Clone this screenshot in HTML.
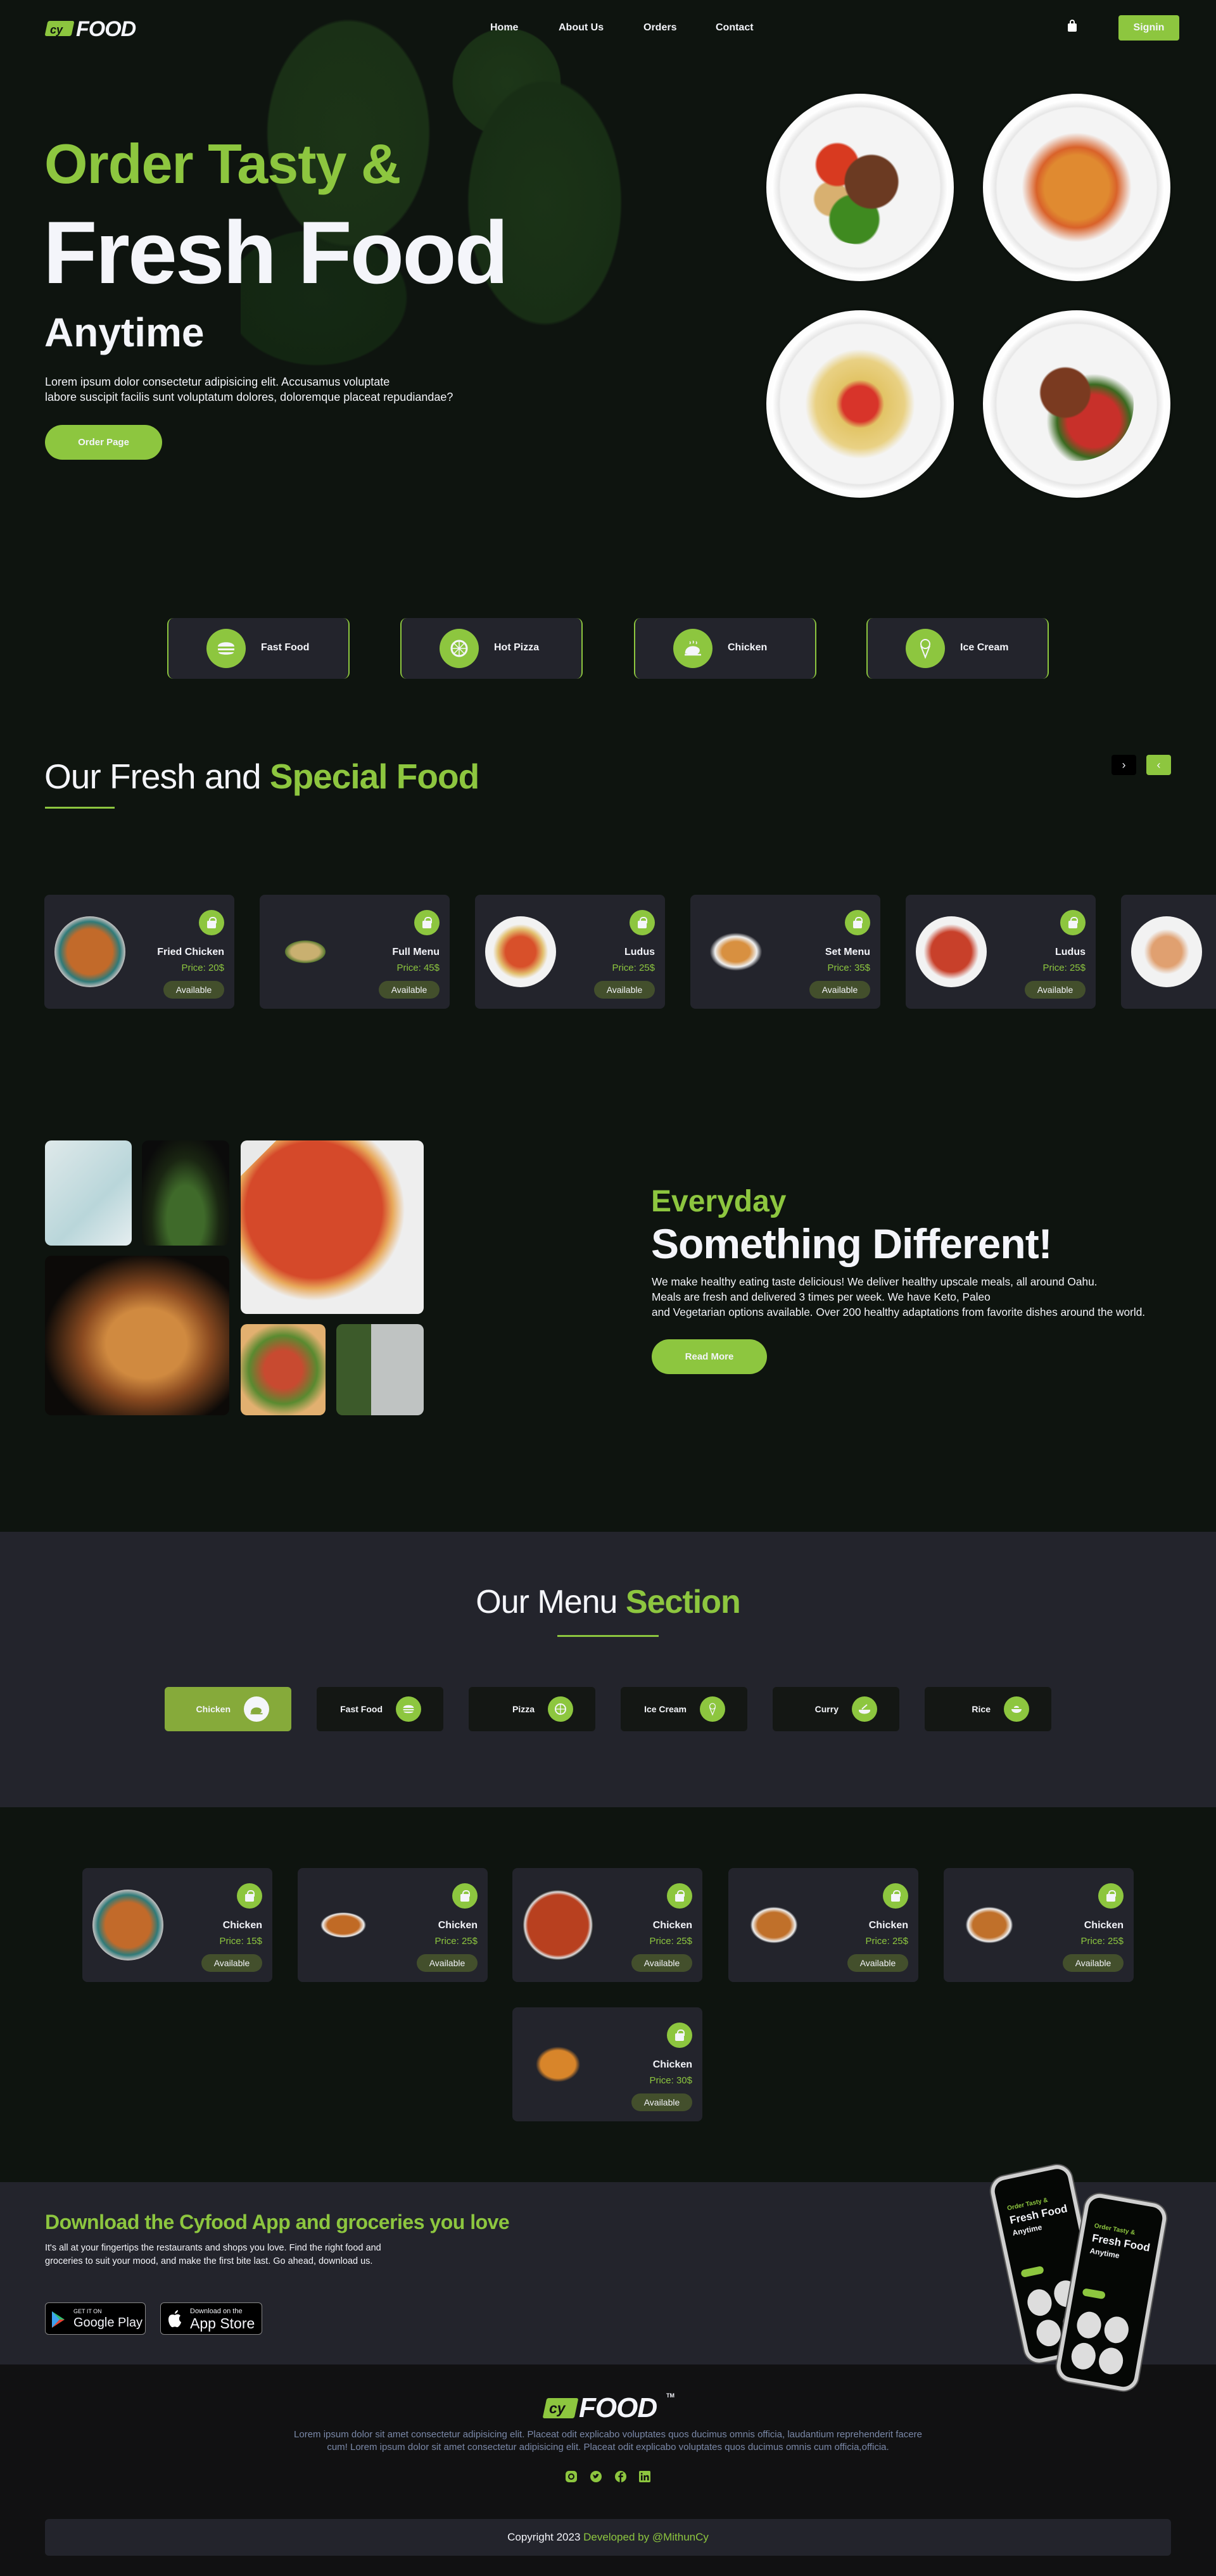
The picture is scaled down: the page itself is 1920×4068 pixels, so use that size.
<!DOCTYPE html>
<html><head><meta charset="utf-8"><style>
*{margin:0;padding:0;box-sizing:border-box}
body{width:1920px;height:4068px;background:#0e140f;font-family:"Liberation Sans",sans-serif;color:#f4f5fa;position:relative;overflow:hidden}
.a{position:absolute}
.g{color:#8dc63f}
.b{font-weight:bold}
.nav{font-size:16px;font-weight:bold;top:35px}
.plate{position:absolute;width:296px;height:296px;border-radius:50%;background:radial-gradient(circle,#f4f4f4 0 60%,#e6e6e6 61%,#fff 66%,#e9e9e9 100%);box-shadow:0 0 4px rgba(0,0,0,.4)}
.food{position:absolute;left:58px;top:58px;width:180px;height:180px;border-radius:50%}
.cat{position:absolute;top:976px;width:288px;height:96px;background:#23242c;border-left:2px solid #8dc63f;border-right:2px solid #8dc63f;border-radius:10px}
.cat .ic{position:absolute;left:60px;top:17px;width:62px;height:62px;border-radius:50%;background:#8dc63f}
.cat span{position:absolute;left:146px;top:38px;font-size:16px;font-weight:bold}
.ic svg,.tab i svg{position:absolute;left:50%;top:50%;transform:translate(-50%,-50%)}
.card{position:absolute;width:300px;height:180px;background:#23242c;border-radius:8px}
.card .im{position:absolute;left:16px;top:34px;width:112px;height:112px;border-radius:50%}
.card .lk{position:absolute;left:244px;top:24px;width:40px;height:40px;border-radius:50%;background:#8dc63f}
.lk:before{content:"";position:absolute;left:13px;top:17px;width:14px;height:12px;background:#f4f5fa;border-radius:2px}
.lk:after{content:"";position:absolute;left:16px;top:11px;width:8px;height:8px;border:2px solid #f4f5fa;border-bottom:none;border-radius:5px 5px 0 0}
.card .nm{position:absolute;right:16px;top:82px;font-size:16px;font-weight:bold;text-align:right;white-space:nowrap}
.card .pr{position:absolute;right:16px;top:107px;font-size:15px;color:#8dc63f;white-space:nowrap}
.card .av{position:absolute;right:16px;top:136px;width:96px;height:28px;border-radius:14px;background:#434f2c;font-size:14px;text-align:center;line-height:28px}
.tab{position:absolute;top:2664px;width:200px;height:70px;background:#141714;border-radius:6px}
.tab span{position:absolute;right:96px;top:27px;font-size:14px;font-weight:bold}
.tab i{position:absolute;left:125px;top:15px;width:40px;height:40px;border-radius:50%;background:#8dc63f}
.ph{position:absolute;border-radius:10px;overflow:hidden}
.btn{position:absolute;background:#8dc63f;color:#f4f5fa;font-weight:bold;font-size:15px;text-align:center;border-radius:30px}
</style></head><body>

<!-- hero bg broccoli -->
<div class="a" style="left:380px;top:0;width:700px;height:580px;background:
radial-gradient(ellipse 180px 250px at 170px 210px,#1c3417 0,#1a3016 70%,transparent 72%),
radial-gradient(ellipse 170px 270px at 480px 320px,#1b3317 0,#182e15 70%,transparent 72%),
radial-gradient(ellipse 120px 120px at 420px 130px,#1d3618 0,#1a3116 70%,transparent 72%),
radial-gradient(ellipse 200px 150px at 120px 470px,#152914 0,#132612 70%,transparent 72%)"></div>

<!-- header -->
<div class="a" style="left:73px;top:33px;width:42px;height:24px;background:#8dc63f;transform:skewX(-12deg);border-radius:3px"></div>
<div class="a" style="left:79px;top:37px;font-size:18px;font-weight:bold;font-style:italic;color:#0e140f">cy</div>
<div class="a b" style="left:120px;top:27px;font-size:34px;font-style:italic;letter-spacing:-1px">FOOD</div>
<div class="a nav" style="left:774px">Home</div>
<div class="a nav" style="left:882px">About Us</div>
<div class="a nav" style="left:1016px">Orders</div>
<div class="a nav" style="left:1130px">Contact</div>
<div class="a" style="left:1686px;top:37px;width:14px;height:13px;background:#fff;border-radius:2px"></div>
<div class="a" style="left:1689px;top:31px;width:8px;height:9px;border:2px solid #fff;border-bottom:none;border-radius:4px 4px 0 0"></div>
<div class="a" style="left:1766px;top:24px;width:96px;height:40px;background:#8dc63f;border-radius:4px;font-size:16px;font-weight:bold;text-align:center;line-height:40px">Signin</div>

<!-- hero text -->
<div class="a b g" style="left:70px;top:208px;font-size:88px;letter-spacing:-1px">Order Tasty &amp;</div>
<div class="a b" style="left:68px;top:318px;font-size:140px;letter-spacing:-3px">Fresh Food</div>
<div class="a b" style="left:70px;top:488px;font-size:64px">Anytime</div>
<div class="a" style="left:71px;top:591px;font-size:18px;line-height:24px">Lorem ipsum dolor consectetur adipisicing elit. Accusamus voluptate<br>labore suscipit facilis sunt voluptatum dolores, doloremque placeat repudiandae?</div>
<div class="btn" style="left:71px;top:671px;width:185px;height:55px;line-height:55px">Order Page</div>

<!-- plates -->
<div class="plate" style="left:1210px;top:148px"><div class="food" style="background:radial-gradient(circle at 60% 45%,#6b3a22 0 28%,transparent 30%),radial-gradient(circle at 30% 30%,#d83a20 0 18%,transparent 20%),radial-gradient(circle at 45% 78%,#3f8a20 0 22%,transparent 24%),radial-gradient(circle at 25% 60%,#d8b070 0 15%,transparent 17%)"></div></div>
<div class="plate" style="left:1552px;top:148px"><div class="food" style="background:radial-gradient(circle,#e08a30 0 40%,#d9622a 50%,transparent 68%)"></div></div>
<div class="plate" style="left:1210px;top:490px"><div class="food" style="background:radial-gradient(circle,#d8342a 0 22%,#e2c466 30%,#e9d184 55%,transparent 68%)"></div></div>
<div class="plate" style="left:1552px;top:490px"><div class="food" style="background:radial-gradient(circle at 40% 40%,#7a3a20 0 25%,transparent 27%),radial-gradient(circle at 65% 65%,#c8302a 0 25%,#3a6a20 35%,transparent 45%)"></div></div>

<!-- categories -->
<div class="cat" style="left:264px"><div class="ic"><svg width="30" height="28" viewBox="0 0 30 28"><path d="M2 11 C2 2 28 2 28 11Z M2 14 H28 V17 H2Z M3 20 H27 C27 25 3 25 3 20Z" fill="#f4f5fa"/></svg></div><span>Fast Food</span></div>
<div class="cat" style="left:632px"><div class="ic"><svg width="30" height="30" viewBox="0 0 30 30"><circle cx="15" cy="15" r="12" fill="none" stroke="#f4f5fa" stroke-width="3"/><path d="M15 3V27M3 15H27M6 6L24 24M24 6L6 24" stroke="#f4f5fa" stroke-width="1.5"/></svg></div><span>Hot Pizza</span></div>
<div class="cat" style="left:1001px"><div class="ic"><svg width="30" height="30" viewBox="0 0 30 30"><path d="M4 22 C4 12 18 10 24 16 C26 20 22 24 16 24Z M2 25 H28" stroke="#f4f5fa" stroke-width="2.5" fill="#f4f5fa"/><path d="M10 4 q2 2 0 4 M15 3 q2 2 0 4 M20 4 q2 2 0 4" stroke="#f4f5fa" stroke-width="1.5" fill="none"/></svg></div><span>Chicken</span></div>
<div class="cat" style="left:1368px"><div class="ic"><svg width="22" height="32" viewBox="0 0 22 32"><circle cx="11" cy="9" r="7" fill="none" stroke="#f4f5fa" stroke-width="2"/><path d="M4 12 L11 30 L18 12" fill="none" stroke="#f4f5fa" stroke-width="2"/></svg></div><span>Ice Cream</span></div>

<!-- special heading -->
<div class="a" style="left:70px;top:1194px;font-size:55px;letter-spacing:-1px">Our Fresh and <span class="g b">Special Food</span></div>
<div class="a" style="left:71px;top:1274px;width:110px;height:3px;background:#8dc63f"></div>
<div class="a" style="left:1755px;top:1192px;width:39px;height:32px;background:#000;border-radius:4px;text-align:center;line-height:32px;font-size:18px">&rsaquo;</div>
<div class="a" style="left:1810px;top:1192px;width:39px;height:32px;background:#8dc63f;border-radius:4px;text-align:center;line-height:32px;font-size:18px">&lsaquo;</div>

<!-- special cards -->
<div class="card" style="left:70px;top:1413px"><div class="im" style="background:radial-gradient(circle,#c26a2a 0 45%,#2f7a78 60%,#bbb 70%)"></div><div class="lk"></div><div class="nm">Fried Chicken</div><div class="pr">Price: 20$</div><div class="av">Available</div></div>
<div class="card" style="left:410px;top:1413px"><div class="im" style="background:radial-gradient(ellipse 45px 25px,#c9b070 0 50%,#5a7a30 70%,transparent 72%)"></div><div class="lk"></div><div class="nm">Full Menu</div><div class="pr">Price: 45$</div><div class="av">Available</div></div>
<div class="card" style="left:750px;top:1413px"><div class="im" style="background:radial-gradient(circle,#d8502a 0 30%,#e3c070 45%,#f2f2f2 55%)"></div><div class="lk"></div><div class="nm">Ludus</div><div class="pr">Price: 25$</div><div class="av">Available</div></div>
<div class="card" style="left:1090px;top:1413px"><div class="im" style="background:radial-gradient(ellipse 55px 40px,#d89040 0 40%,#eee 60%,transparent 75%)"></div><div class="lk"></div><div class="nm">Set Menu</div><div class="pr">Price: 35$</div><div class="av">Available</div></div>
<div class="card" style="left:1430px;top:1413px"><div class="im" style="background:radial-gradient(circle,#c8402a 0 40%,#f2f2f2 55%)"></div><div class="lk"></div><div class="nm">Ludus</div><div class="pr">Price: 25$</div><div class="av">Available</div></div>
<div class="card" style="left:1770px;top:1413px"><div class="im" style="background:radial-gradient(circle,#e0a070 0 30%,#f2f2f2 45%)"></div></div>

<!-- collage -->
<div class="ph" style="left:71px;top:1801px;width:137px;height:166px;background:linear-gradient(135deg,#dfe9ea,#b9d6da 60%,#e6eef0)"></div>
<div class="ph" style="left:224px;top:1801px;width:138px;height:166px;background:radial-gradient(ellipse at 50% 75%,#3f6a2a 0 30%,#1a2612 55%,#0b0b0b 80%)"></div>
<div class="ph" style="left:380px;top:1801px;width:289px;height:274px;background:linear-gradient(135deg,#e9e9e9 0 10%,transparent 10%),radial-gradient(circle at 40% 40%,#d5492a 0 45%,#e8a85a 52%,#eee 60%)"></div>
<div class="ph" style="left:71px;top:1983px;width:291px;height:252px;background:radial-gradient(ellipse at 55% 55%,#d08a40 0 28%,#8a4a20 45%,#0c0a08 72%)"></div>
<div class="ph" style="left:380px;top:2091px;width:134px;height:144px;background:radial-gradient(circle,#c84a30 0 30%,#5a8a30 55%,#e2b070 75%)"></div>
<div class="ph" style="left:531px;top:2091px;width:138px;height:144px;background:linear-gradient(90deg,#3c5a2a 0 40%,#bfc3c2 40% 100%)"></div>

<div class="a b g" style="left:1028px;top:1870px;font-size:48px">Everyday</div>
<div class="a b" style="left:1028px;top:1926px;font-size:66px;letter-spacing:-1px">Something Different!</div>
<div class="a" style="left:1029px;top:2012px;font-size:17.3px;line-height:24px">We make healthy eating taste delicious! We deliver healthy upscale meals, all around Oahu.<br>Meals are fresh and delivered 3 times per week. We have Keto, Paleo<br>and Vegetarian options available. Over 200 healthy adaptations from favorite dishes around the world.</div>
<div class="btn" style="left:1029px;top:2115px;width:182px;height:55px;line-height:55px">Read More</div>

<!-- menu section -->
<div class="a" style="left:0;top:2419px;width:1920px;height:435px;background:#23242c"></div>
<div class="a" style="left:0;top:2500px;width:1920px;text-align:center;font-size:52px;letter-spacing:-1px">Our Menu <span class="g b">Section</span></div>
<div class="a" style="left:880px;top:2582px;width:160px;height:3px;background:#8dc63f"></div>
<div class="tab" style="left:260px;background:#86aa3a"><span>Chicken</span><i style="background:#f4f5fa"><svg width="22" height="22" viewBox="0 0 30 30"><path d="M4 22 C4 12 18 10 24 16 C26 20 22 24 16 24Z M2 25 H28" stroke="#86aa3a" stroke-width="2.5" fill="#86aa3a"/></svg></i></div>
<div class="tab" style="left:500px"><span>Fast Food</span><i><svg width="20" height="18" viewBox="0 0 30 28"><path d="M2 11 C2 2 28 2 28 11Z M2 14 H28 V17 H2Z M3 20 H27 C27 25 3 25 3 20Z" fill="#f4f5fa"/></svg></i></div>
<div class="tab" style="left:740px"><span>Pizza</span><i><svg width="20" height="20" viewBox="0 0 30 30"><circle cx="15" cy="15" r="12" fill="none" stroke="#f4f5fa" stroke-width="3"/><path d="M15 3V27M3 15H27" stroke="#f4f5fa" stroke-width="2"/></svg></i></div>
<div class="tab" style="left:980px"><span>Ice Cream</span><i><svg width="14" height="22" viewBox="0 0 22 32"><circle cx="11" cy="9" r="7" fill="none" stroke="#f4f5fa" stroke-width="2"/><path d="M4 12 L11 30 L18 12" fill="none" stroke="#f4f5fa" stroke-width="2"/></svg></i></div>
<div class="tab" style="left:1220px"><span>Curry</span><i><svg width="20" height="20" viewBox="0 0 20 20"><path d="M2 12 H18 C18 18 2 18 2 12Z M6 10 L14 3" stroke="#f4f5fa" stroke-width="2" fill="#f4f5fa"/></svg></i></div>
<div class="tab" style="left:1460px"><span>Rice</span><i><svg width="20" height="20" viewBox="0 0 20 20"><path d="M2 10 H18 C18 18 2 18 2 10Z M6 8 C6 4 14 4 14 8Z" fill="#f4f5fa"/></svg></i></div>

<div class="card" style="left:130px;top:2950px"><div class="im" style="background:radial-gradient(circle,#c26a2a 0 45%,#2f7a78 60%,#bbb 70%)"></div><div class="lk"></div><div class="nm">Chicken</div><div class="pr">Price: 15$</div><div class="av">Available</div></div>
<div class="card" style="left:470px;top:2950px"><div class="im" style="background:radial-gradient(ellipse 50px 28px,#c06a25 0 50%,#eee 65%,transparent 72%)"></div><div class="lk"></div><div class="nm">Chicken</div><div class="pr">Price: 25$</div><div class="av">Available</div></div>
<div class="card" style="left:809px;top:2950px"><div class="im" style="background:radial-gradient(circle,#b8401f 0 60%,#ddd 66%,#222 70%)"></div><div class="lk"></div><div class="nm">Chicken</div><div class="pr">Price: 25$</div><div class="av">Available</div></div>
<div class="card" style="left:1150px;top:2950px"><div class="im" style="background:radial-gradient(ellipse 52px 40px,#c0702a 0 50%,#eee 65%,transparent 72%)"></div><div class="lk"></div><div class="nm">Chicken</div><div class="pr">Price: 25$</div><div class="av">Available</div></div>
<div class="card" style="left:1490px;top:2950px"><div class="im" style="background:radial-gradient(ellipse 52px 40px,#c0702a 0 50%,#eee 65%,transparent 72%)"></div><div class="lk"></div><div class="nm">Chicken</div><div class="pr">Price: 25$</div><div class="av">Available</div></div>
<div class="card" style="left:809px;top:3170px"><div class="im" style="background:radial-gradient(ellipse 50px 40px,#d8852a 0 55%,transparent 70%)"></div><div class="lk"></div><div class="nm">Chicken</div><div class="pr">Price: 30$</div><div class="av">Available</div></div>

<!-- app section -->
<div class="a" style="left:0;top:3446px;width:1920px;height:288px;background:#23242c"></div>
<div class="a" style="left:0;top:3734px;width:1920px;height:334px;background:#111112"></div>
<div class="a b g" style="left:71px;top:3491px;font-size:32px;letter-spacing:-.5px">Download the Cyfood App and groceries you love</div>
<div class="a" style="left:71px;top:3540px;font-size:14.5px;line-height:21px">It's all at your fingertips the restaurants and shops you love. Find the right food and<br>groceries to suit your mood, and make the first bite last. Go ahead, download us.</div>
<div class="a" style="left:71px;top:3636px;width:159px;height:51px;background:#000;border:1px solid #888;border-radius:6px">
 <svg class="a" style="left:8px;top:12px" width="24" height="28" viewBox="0 0 24 28"><path d="M2 1 L22 14 L2 27Z" fill="#2fbf71"/><path d="M2 1 L14 14 L2 27Z" fill="#3ea2f0"/><path d="M14 14 L22 14 L2 27Z" fill="#e94235"/></svg>
 <div class="a" style="left:44px;top:8px;font-size:9px">GET IT ON</div><div class="a" style="left:44px;top:20px;font-size:20px">Google Play</div></div>
<div class="a" style="left:253px;top:3636px;width:161px;height:51px;background:#000;border:1px solid #888;border-radius:6px">
 <svg class="a" style="left:10px;top:10px" width="24" height="30" viewBox="0 0 24 30"><path d="M12 9 C8 7 2 8 2 16 C2 22 6 29 9 28 C11 27 13 27 15 28 C18 29 22 22 22 20 C18 18 18 12 21 10 C19 7 15 7 12 9Z M12 7 C12 4 14 2 17 1 C17 4 15 6 12 7Z" fill="#fff"/></svg>
 <div class="a" style="left:46px;top:7px;font-size:11px">Download on the</div><div class="a" style="left:46px;top:19px;font-size:23px">App Store</div></div>

<!-- phones -->
<div class="a" style="left:1590px;top:3425px;width:130px;height:300px;background:#050705;border:6px solid #cfcfcf;border-radius:24px;transform:rotate(-12deg);box-shadow:0 0 0 2px #555">
 <div class="a b g" style="left:14px;top:40px;font-size:10px">Order Tasty &amp;</div><div class="a b" style="left:14px;top:55px;font-size:17px">Fresh Food</div><div class="a b" style="left:14px;top:78px;font-size:12px">Anytime</div>
 <div class="a" style="left:14px;top:145px;width:36px;height:12px;background:#8dc63f;border-radius:6px"></div>
 <div class="a" style="left:14px;top:180px;width:38px;height:42px;border-radius:50%;background:#ddd"></div><div class="a" style="left:58px;top:175px;width:38px;height:42px;border-radius:50%;background:#ddd"></div>
 <div class="a" style="left:18px;top:230px;width:38px;height:42px;border-radius:50%;background:#ddd"></div><div class="a" style="left:62px;top:224px;width:38px;height:42px;border-radius:50%;background:#ddd"></div>
</div>
<div class="a" style="left:1690px;top:3470px;width:130px;height:300px;background:#050705;border:6px solid #cfcfcf;border-radius:24px;transform:rotate(10deg);box-shadow:0 0 0 2px #555">
 <div class="a b g" style="left:14px;top:40px;font-size:10px">Order Tasty &amp;</div><div class="a b" style="left:14px;top:55px;font-size:17px">Fresh Food</div><div class="a b" style="left:14px;top:78px;font-size:12px">Anytime</div>
 <div class="a" style="left:14px;top:145px;width:36px;height:12px;background:#8dc63f;border-radius:6px"></div>
 <div class="a" style="left:14px;top:180px;width:38px;height:42px;border-radius:50%;background:#ddd"></div><div class="a" style="left:58px;top:180px;width:38px;height:42px;border-radius:50%;background:#ddd"></div>
 <div class="a" style="left:14px;top:230px;width:38px;height:42px;border-radius:50%;background:#ddd"></div><div class="a" style="left:58px;top:230px;width:38px;height:42px;border-radius:50%;background:#ddd"></div>
</div>

<!-- footer -->
<div class="a" style="left:860px;top:3787px;width:50px;height:32px;background:#8dc63f;transform:skewX(-12deg);border-radius:3px"></div>
<div class="a" style="left:867px;top:3790px;font-size:23px;font-weight:bold;font-style:italic;color:#111112">cy</div>
<div class="a b" style="left:914px;top:3778px;font-size:44px;font-style:italic;letter-spacing:-1px">FOOD</div>
<div class="a b" style="left:1052px;top:3778px;font-size:9px">TM</div>
<div class="a" style="left:0;top:3835px;width:1920px;text-align:center;font-size:15px;line-height:20px;color:#7a88a8">Lorem ipsum dolor sit amet consectetur adipisicing elit. Placeat odit explicabo voluptates quos ducimus omnis officia, laudantium reprehenderit facere<br>cum! Lorem ipsum dolor sit amet consectetur adipisicing elit. Placeat odit explicabo voluptates quos ducimus omnis cum officia,officia.</div>
<svg class="a" style="left:893px;top:3902px" width="18" height="18" viewBox="0 0 18 18"><rect width="18" height="18" rx="5" fill="#8dc63f"/><circle cx="9" cy="9" r="4" fill="none" stroke="#111" stroke-width="2"/></svg>
<svg class="a" style="left:932px;top:3902px" width="18" height="18" viewBox="0 0 18 18"><circle cx="9" cy="9" r="9" fill="#8dc63f"/><path d="M4 12 C8 13 12 10 13 6 L14 5 L12.5 5.3 C11 4 8.5 5 9 7.5 C7 7.5 5.5 6.5 4.5 5.5 C4 7 5 8.5 6 9 L5 9 C5.5 10.5 6.5 11 7.5 11 C6.5 12 5 12 4 12Z" fill="#111"/></svg>
<svg class="a" style="left:971px;top:3902px" width="18" height="18" viewBox="0 0 18 18"><circle cx="9" cy="9" r="9" fill="#8dc63f"/><path d="M10 18 V10 H12.5 L13 7.5 H10 V6 C10 5 10.5 4.5 11.5 4.5 H13 V2.5 H11 C8.5 2.5 7.5 4 7.5 6 V7.5 H5.5 V10 H7.5 V18Z" fill="#111"/></svg>
<svg class="a" style="left:1009px;top:3902px" width="18" height="18" viewBox="0 0 18 18"><rect width="18" height="18" rx="2" fill="#8dc63f"/><path d="M3 7 H5.5 V15 H3Z M4.2 3 a1.4 1.4 0 1 1 0 2.8 a1.4 1.4 0 1 1 0-2.8Z M7.5 7 H10 V8.5 C10.5 7.5 11.5 6.8 13 6.8 C15 6.8 15.5 8 15.5 10 V15 H13 V10.5 C13 9.5 12.7 9 12 9 C11 9 10 9.5 10 10.8 V15 H7.5Z" fill="#111"/></svg>
<div class="a" style="left:71px;top:3978px;width:1778px;height:58px;background:#23242c;border-radius:6px;text-align:center;line-height:58px;font-size:17px">Copyright 2023 <span class="g">Developed by @MithunCy</span></div>
</body></html>
